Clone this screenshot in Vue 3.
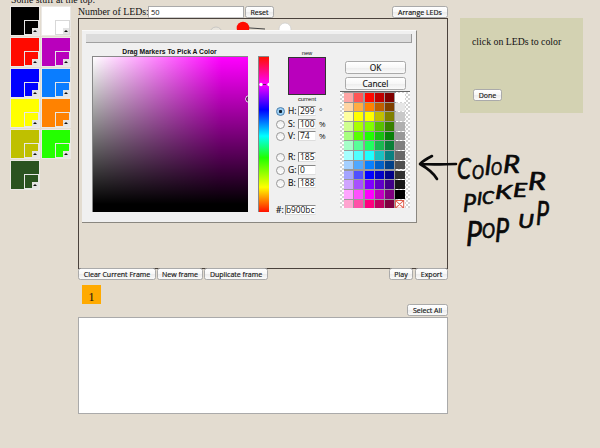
<script setup>
import { ref } from 'vue'

const swatches = ['#000000', '#ffffff', '#ff0a00', '#b900bc', '#0000ff', '#0a7dff', '#ffff00', '#ff8200', '#bfc000', '#24ff00', '#2a5320']
const frames = [1]
const ledCount = ref('50')
const hex = ref('b900bc')

const channels = [
  { label: 'H', value: '299', unit: '°', top: 'h', on: true },
  { label: 'S', value: '100', unit: '%', top: 's' },
  { label: 'V', value: '74', unit: '%', top: 'v' },
  { label: 'R', value: '185', unit: '', top: 'r' },
  { label: 'G', value: '0', unit: '', top: 'g' },
  { label: 'B', value: '188', unit: '', top: 'b' },
]

const palette = [
  '#ffa5a5', '#ff5555', '#ff0800', '#c00000', '#800000', '#ffffff',
  '#ffd5a5', '#ffad42', '#ff8200', '#c06000', '#804000', '#e6e6e6',
  '#ffffa0', '#ffff00', '#ffff00', '#c0c000', '#808000', '#c8c8c8',
  '#d0ff90', '#a8ff00', '#80ff00', '#58c000', '#388000', '#b0b0b0',
  '#a8ff80', '#58ff00', '#20ff00', '#18c010', '#088008', '#989898',
  '#a5ffc8', '#58ff98', '#20ff60', '#18b850', '#088038', '#808080',
  '#a5ffff', '#50ffff', '#20ffff', '#18c0c0', '#088080', '#686868',
  '#a5d0ff', '#50a8ff', '#0880ff', '#0060c8', '#004088', '#505050',
  '#a5a5ff', '#5050ff', '#0000ff', '#0000c8', '#000088', '#303030',
  '#d0a5ff', '#a850ff', '#8000ff', '#6000c8', '#400088', '#181818',
  '#ffa5ff', '#ff50ff', '#ff00ff', '#c000c0', '#800080', '#000000',
  '#ffa5d0', '#ff50a8', '#ff0080', '#c00060', '#800040', 'none',
]

// Each letter: character, left, baseline, font size, width
const note = [
  [['C', 457, 179, 29, 14], ['O', 472, 179, 20, 12], ['l', 485, 175, 27, 6], ['O', 491, 175, 18, 11], ['R', 503, 173, 25, 17]],
  [['P', 463, 212, 25, 13], ['I', 477, 205, 17, 5], ['C', 482, 204, 17, 12], ['K', 495, 199, 19, 17], ['E', 513, 197, 19, 14], ['R', 528, 190, 25, 18]],
  [['P', 466, 246, 34, 16], ['O', 482, 238, 21, 13], ['P', 495, 242, 32, 14]],
  [['U', 518, 228, 20, 16], ['P', 536, 225, 32, 13]],
]
</script>

<template>
  <div class="page">
    <aside class="left">
      <p class="top-text">Some stuff at the top:</p>
      <div class="swatches">
        <div v-for="c in swatches" :key="c" class="swatch" :style="{ background: c }">
          <span class="mini" :class="{ light: c === '#ffffff' }"><i class="arrow"></i></span>
        </div>
      </div>
    </aside>

    <main class="main">
      <div class="toolbar">
        <label class="led-label">Number of LEDs:</label>
        <input v-model="ledCount" class="led-input" />
        <button class="btn reset">Reset</button>
        <button class="btn arrange">Arrange LEDs</button>
      </div>

      <section class="canvas">
        <svg class="leds" width="368" height="11" viewBox="79 19 368 11">
          <path d="M243 27.5L265 29" stroke="#444" />
          <circle cx="216" cy="33" r="6" fill="#e8e4dc" stroke="#bbb" stroke-width=".7" />
          <circle cx="243" cy="28" r="6.3" fill="#ff0a00" />
          <circle cx="285" cy="29" r="6" fill="#fff" stroke="#ccc" stroke-width=".7" />
        </svg>
        <div class="dialog">
          <div class="titlebar"></div>
          <div class="body">
            <div class="field-col">
              <h1>Drag Markers To Pick A Color</h1>
              <div class="field">
                <svg width="155" height="155"><circle cx="156" cy="42" r="3.3" fill="none" stroke="#fff" /><circle cx="156" cy="42" r="2.4" fill="none" stroke="#333" /></svg>
              </div>
            </div>
            <div class="hue">
              <svg width="10" height="155"><path d="M3 27.5h4" stroke="#6b126c" /><circle cx="2" cy="27.5" r="1.7" fill="#fff" /><circle cx="10" cy="27.5" r="1.7" fill="#fff" /></svg>
            </div>
            <div class="values">
              <div class="preview">
                <span>new</span>
                <div class="chip"></div>
                <span class="current">current</span>
              </div>
              <div v-for="c in channels" :key="c.label" class="channel" :class="c.top">
                <i class="radio" :class="{ on: c.on }"></i>
                <b>{{ c.label }}:</b>
                <span class="num">{{ c.value }}</span>
                <span class="unit">{{ c.unit }}</span>
              </div>
              <div class="hex"><b>#:</b><span class="num">{{ hex }}</span></div>
            </div>
            <div class="choices">
              <button class="btn big">OK</button>
              <button class="btn big cancel">Cancel</button>
              <div class="palette">
                <template v-for="(c, i) in palette" :key="i">
                  <svg v-if="c === 'none'" class="cell none" viewBox="0 0 9 9" preserveAspectRatio="none"><path d="M0.5 0.5L8.5 8.5M8.5 0.5L0.5 8.5M.5 .5h8v8h-8z" fill="none" stroke="#e0604e" /></svg>
                  <i v-else class="cell" :style="{ background: c }"></i>
                </template>
              </div>
            </div>
          </div>
        </div>
      </section>

      <div class="actions">
        <button class="btn clear">Clear Current Frame</button>
        <button class="btn new">New frame</button>
        <button class="btn dup">Duplicate frame</button>
        <button class="btn play">Play</button>
        <button class="btn export">Export</button>
      </div>
      <div class="frames"><span v-for="f in frames" :key="f" class="frame">{{ f }}</span></div>
      <div class="select-row"><button class="btn select">Select All</button></div>
      <div class="output"></div>
    </main>

    <aside class="hint">
      <p>click on LEDs to color</p>
      <button class="btn done">Done</button>
    </aside>

    <svg class="annotation" width="600" height="448">
      <path d="M456 164C446 164 435 165 421 164M432 156C428 158 423 161 420 164C427 168 433 172 437 179" />
      <text v-for="(word, w) in note" :key="w"><tspan v-for="(l, i) in word" :key="i" :x="l[1]" :y="l[2]" :font-size="l[3]" :textLength="l[4]" lengthAdjust="spacingAndGlyphs">{{ l[0] }}</tspan></text>
    </svg>
  </div>
</template>

<style>
body { margin: 0; background: #e3dcd0; }
</style>

<style scoped>
* { box-sizing: border-box; }
.page {
  position: relative;
  display: flex;
  width: 600px;
  height: 448px;
  overflow: hidden;
  background: #e3dcd0;
  color: #111;
  font-family: "Liberation Serif", serif;
  font-size: 9.8px;
}
.left { width: 78px; padding-left: 10px; }
.top-text { margin: -7px 0 0 1px; height: 13px; line-height: 13px; white-space: nowrap; }
.swatches { display: grid; grid-template-columns: 30px 30px; grid-auto-rows: 30px; gap: 0.8px; }
.swatch { display: flex; align-items: flex-end; justify-content: flex-end; border: 1px solid #ebe8e4; }
.mini { display: flex; align-items: flex-end; justify-content: flex-end; width: 15px; height: 15px; border: 1px solid #e6e6e6; }
.mini.light { border-color: #d8d8d8; }
.arrow { width: 6px; height: 6px; background: #e4e4e4; display: grid; place-items: center; }
.arrow::after { content: ""; border: 2px solid transparent; border-top: 0; border-bottom: 2px solid #111; }

.main { width: 370px; display: flex; flex-direction: column; }
.toolbar { display: flex; height: 18px; padding-top: 6px; }
.led-label { width: 70px; line-height: 11px; white-space: nowrap; }
.led-input { width: 96px; height: 12px; padding: 0 2px; border: 1px solid #aaa; border-bottom-color: #ccc; background: #fff; font: 7.5px "Open Sans", sans-serif; color: #111; }
.btn {
  display: flex; align-items: center; justify-content: center;
  height: 12px; padding: 0; border: 1px solid #aaa; border-radius: 2.5px;
  background: linear-gradient(#fff, #f7f7f7 50%, #ededed 55%, #fafafa);
  color: #111; font: 7px/9px "Open Sans", sans-serif; white-space: nowrap;
  -webkit-text-stroke: 0.15px #111;
}
.reset { width: 29px; margin-left: 1px; }
.arrange { width: 56px; margin-left: auto; }

.canvas { height: 251px; border: 1px solid #4a423c; }
.leds { display: block; }
.dialog { width: 335px; height: 193px; margin-left: 3px; padding: 3px 4px; background: #f0f0f0; border: solid #8a8780; border-width: 0 1.5px 1px 0; border-top: 1px solid #fafafa; }
.titlebar { height: 9px; background: #dcdcdc; border-bottom: 1px solid #a0a0a0; border-right: 1px solid #999; }
.body { display: flex; padding-left: 6px; }
.field-col { width: 156px; }
h1 { margin: 4px 0 0; height: 9px; font: bold 6.75px/9px "Liberation Sans", sans-serif; text-align: center; white-space: nowrap; padding-right: 1px; }
.field { height: 156px; border: 1px solid #888; border-right: 0; border-bottom: 0; background: linear-gradient(rgba(0,0,0,0), #000 95%), linear-gradient(90deg, #fff, #ff00ff 83%); }
.field svg, .hue svg { display: block; overflow: hidden; }
.hue { width: 11px; height: 156px; margin: 13px 0 0 10px; border: 1px solid #888; border-right: 0; border-bottom: 0; background: linear-gradient(#ff1000, #ff00ff 17.5%, #0000ff 34%, #00ffff 51%, #20ff00 65%, #ffff00 84%, #ff1000); }
.values { width: 71px; padding: 7px 0 0 7px; font-family: "Open Sans", sans-serif; }
.preview { display: flex; flex-direction: column; align-items: center; width: 38px; margin-left: 12px; font: 5.8px/7px "Liberation Sans", sans-serif; }
.chip { width: 38px; height: 38px; border: 1px solid #333; background: #b900bc; }
.current { padding-top: 1px; height: 7px; }
.channel { display: flex; align-items: center; height: 10px; }
.channel b, .hex b { width: 12px; padding-left: 2px; font: 8.5px/10px "Open Sans", sans-serif; -webkit-text-stroke: 0.15px #111; }
.radio { width: 9px; height: 9px; margin-right: 1px; border: 1px solid #999; border-radius: 50%; background: linear-gradient(#eee, #fff); flex: none; }
.radio.on { border-color: #4b7fae; background: radial-gradient(circle, #123 0 1.3px, #9acdf2 2px); }
.num { width: 18px; height: 10px; padding-left: 1px; overflow: hidden; border: 1px solid #888; border-right-color: #eee; border-bottom-color: #ddd; background: #fff; font: 8.5px/8px "Open Sans", sans-serif; }
.unit { padding-left: 3px; font-size: 8px; line-height: 10px; }
.h { margin-top: 4px; }
.s { margin-top: 3px; }
.v { margin-top: 2px; }
.r { margin-top: 11px; }
.g { margin-top: 3px; }
.b { margin-top: 3px; }
.hex { display: flex; height: 10px; margin-top: 17px; }
.hex b { width: 9px; padding: 0; }
.hex .num { width: 31px; padding-left: 0; font-size: 8.3px; }

.choices { width: 71px; flex: none; padding: 18px 0 0 5px; }
.big { width: 61px; height: 13px; font-size: 8.4px; }
.cancel { margin-top: 3px; }
.palette {
  display: grid; grid-template-columns: repeat(6, 9.2px); grid-auto-rows: 8.65px; gap: 1.05px 1.1px;
  width: 70px; height: 117px; margin: 1px 0 0 -5px; padding: 1px 4px 0;
  border-top: 1px solid #666;
  background: linear-gradient(#9a9a9a, #9a9a9a) 4px 0 / 52px 116px no-repeat, conic-gradient(#d4d4d4 25%, #fff 0 50%, #d4d4d4 0 75%, #fff 0) 0 0 / 4px 4px;
}
.cell { display: block; width: 100%; height: 100%; }
.none { background: #fff; }

.actions { display: flex; height: 12px; margin-top: -1px; }
.clear { width: 78px; }
.new { width: 46px; margin-left: 1px; }
.dup { width: 64px; margin-left: 1px; }
.play { width: 24px; margin-left: auto; }
.export { width: 33px; margin-left: 2px; }
.frames { display: flex; height: 24px; padding: 5px 0 0 4px; }
.frame { width: 19px; height: 19px; background: #ffaa00; font-size: 12px; line-height: 24px; text-align: center; }
.select-row { display: flex; justify-content: flex-end; height: 13px; }
.select { width: 41px; }
.output { height: 97px; background: #fff; border: 1px solid #aaa; }

.hint { width: 123px; height: 95px; margin: 18px 0 0 12px; padding: 18px 12px 0; background: #d3d2b2; }
.hint p { margin: 0; height: 53px; line-height: 12px; white-space: nowrap; }
.done { width: 29px; margin-left: 1px; }

.annotation { position: absolute; inset: 0; pointer-events: none; fill: none; stroke: #0a0a0a; stroke-width: 2.6; stroke-linecap: round; stroke-linejoin: round; }
.annotation text { fill: #0a0a0a; stroke-width: 0.7; font-family: Lato, sans-serif; font-style: italic; }
</style>
